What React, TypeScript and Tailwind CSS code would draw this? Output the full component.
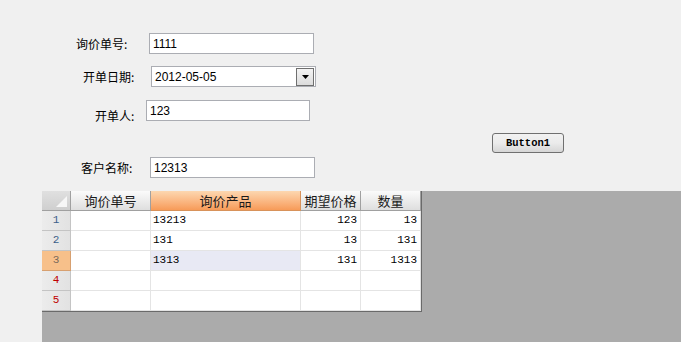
import React from "react";

const cn = '"Noto Sans CJK SC", "Liberation Sans", sans-serif';

function Box({ w, value, dropdown = false }: { w: string; value: string; dropdown?: boolean }) {
  return (
    <div className={`${w} h-[21px] bg-white border border-[#abadb3] flex items-center justify-between`}>
      <span className="pl-[3px] text-[12px] text-black leading-none" style={{ fontFamily: '"Liberation Sans", sans-serif' }}>
        {value}
      </span>
      {dropdown && (
        <div className="w-[18px] h-[18px] mr-[1px] border border-[#6f6f6f] bg-gradient-to-b from-[#f4f4f4] to-[#dcdcdc] flex items-center justify-center">
          <svg width="7" height="4" viewBox="0 0 7 4"><path d="M0 0h7L3.5 4z" fill="#000" /></svg>
        </div>
      )}
    </div>
  );
}

const cols = ["w-[80px]", "w-[150px]", "w-[60px]", "w-[60px]"];
const headers = ["询价单号", "询价产品", "期望价格", "数量"];
const rows = [
  ["", "13213", "123", "13"],
  ["", "131", "13", "131"],
  ["", "1313", "131", "1313"],
  ["", "", "", ""],
  ["", "", "", ""],
];

const mono = '"Liberation Mono", monospace';

export default function App() {
  return (
    <div className="w-[681px] h-[342px] bg-[#f0f0f0] overflow-hidden flex flex-col" style={{ fontFamily: cn }}>
      <div className="h-[191px] flex flex-col">
        <div className="flex items-center mt-[33px] h-[21px]">
          <span className="w-[149px] pl-[76px] text-[12px] text-black">询价单号:</span>
          <Box w="w-[165px]" value="1111" />
        </div>
        <div className="flex items-center mt-[12px] h-[21px]">
          <span className="w-[151px] pl-[83px] text-[12px] text-black">开单日期:</span>
          <Box w="w-[165px]" value="2012-05-05" dropdown />
        </div>
        <div className="flex mt-[13px] h-[21px]">
          <span className="w-[146px] pl-[95px] pt-[7px] text-[12px] text-black">开单人:</span>
          <Box w="w-[164px]" value="123" />
        </div>
        <div className="flex mt-[12px] h-[21px]">
          <button
            className="ml-[492px] w-[72px] h-[20px] rounded-[3px] border border-[#707070] bg-gradient-to-b from-[#f2f2f2] via-[#ebebeb] to-[#d6d6d6] text-[10.5px] font-bold text-black leading-none"
            style={{ fontFamily: mono }}
          >
            Button1
          </button>
        </div>
        <div className="flex items-center mt-[3px] h-[21px]">
          <span className="w-[150px] pl-[81px] text-[12px] text-black">客户名称:</span>
          <Box w="w-[165px]" value="12313" />
        </div>
      </div>
      <div className="flex-1 bg-[#ababab] ml-[42px]">
        <div className="w-[380px] border-r border-b border-[#6a6a6a] bg-white">
          <div className="flex h-[20px]">
            <div className="w-[29px] relative bg-gradient-to-b from-[#e0e0e0] to-[#cfcfcf] border-r border-b border-[#a0a0a0]">
              <svg className="absolute right-[3px] bottom-[3px]" width="11" height="11" viewBox="0 0 11 11"><path d="M11 0V11H0z" fill="#f7f7f7" /></svg>
            </div>
            {headers.map((h, i) => (
              <div
                key={h}
                className={`${cols[i]} border-r border-b flex items-center justify-center text-[13px] text-[#1a1a1a] ${
                  i === 1
                    ? "bg-gradient-to-b from-[#fcd7b0] to-[#f79b58] border-[#d8925a]"
                    : "bg-gradient-to-b from-[#fbfbfb] to-[#dedede] border-[#a0a0a0]"
                }`}
              >
                {h}
              </div>
            ))}
          </div>
          {rows.map((r, ri) => (
            <div key={ri} className="flex h-[20px]">
              <div
                className={`w-[29px] border-r border-b flex items-center justify-center text-[11px] ${
                  ri === 2
                    ? "bg-[#f7c08a] border-[#d7a070] text-[#7a6a5a]"
                    : "bg-gradient-to-r from-[#ececec] to-[#e2e2e2] border-[#c4c4c4] " + (ri >= 3 ? "text-[#c00000]" : "text-[#3b5f8a]")
                }`}
                style={{ fontFamily: mono }}
              >
                {ri + 1}
              </div>
              {r.map((c, ci) => (
                <div
                  key={ci}
                  className={`${cols[ci]} border-r border-b border-[#e4e4e4] flex items-center text-[11px] text-black ${
                    ci >= 2 ? "justify-end pr-[3px]" : "pl-[2px]"
                  } ${ri === 2 && ci === 1 ? "bg-[#e8e9f4]" : ""}`}
                  style={{ fontFamily: mono }}
                >
                  {c}
                </div>
              ))}
            </div>
          ))}
        </div>
      </div>
    </div>
  );
}
